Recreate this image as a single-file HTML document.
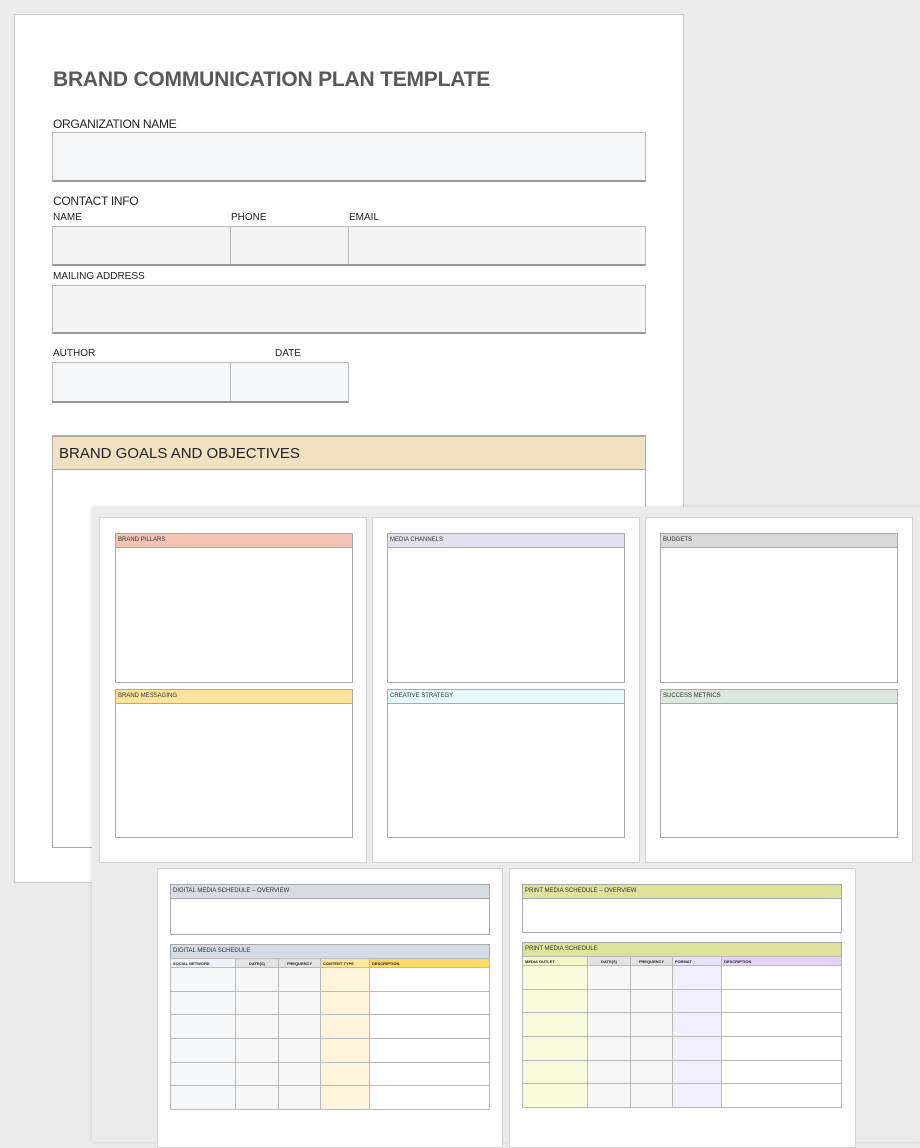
<!DOCTYPE html><html><head><style>
*{box-sizing:border-box;margin:0;padding:0}
body{width:920px;height:1142px;background:#ececec;position:relative;overflow:hidden;font-family:"Liberation Sans",sans-serif;color:#222}
.a{position:absolute}
.lbl{position:absolute;font-size:11px;color:#222}
.box{position:absolute;border:1px solid #bbb;border-bottom:2px solid #999}
.card{position:absolute;background:#fff;border:1px solid #d4d4d4}
.h{position:absolute;border:1px solid #aaa;font-size:6px;line-height:13px;padding:0 2px;color:#333}
.b{position:absolute;border:1px solid #aaa;background:#fff}
table{position:absolute;border-collapse:collapse;font-size:4px;font-weight:bold}
td{border:1px solid #bbb;padding:0 2px}
</style></head><body>
<div class="a" style="left:14px;top:14px;width:670px;height:869px;background:#fff;border:1px solid #ccc"></div>
<div class="a" style="left:53px;top:68px;font-size:21px;font-weight:bold;color:#595959;letter-spacing:-0.2px">BRAND COMMUNICATION PLAN TEMPLATE</div>
<div class="lbl" style="left:53px;top:117px;font-size:12px;letter-spacing:-0.3px">ORGANIZATION NAME</div>
<div class="box" style="left:52px;top:132px;width:594px;height:50px;background:#f7f8fa"></div>
<div class="lbl" style="left:53px;top:194px;font-size:12px;letter-spacing:-0.3px">CONTACT INFO</div>
<div class="lbl" style="left:53px;top:212px;font-size:10px">NAME</div>
<div class="lbl" style="left:231px;top:212px;font-size:10px">PHONE</div>
<div class="lbl" style="left:349px;top:212px;font-size:10px">EMAIL</div>
<div class="box" style="left:52px;top:226px;width:594px;height:40px;background:#f4f4f4"></div>
<div class="a" style="left:230px;top:227px;width:1px;height:37px;background:#bbb"></div>
<div class="a" style="left:348px;top:227px;width:1px;height:37px;background:#bbb"></div>
<div class="lbl" style="left:53px;top:271px;font-size:10px">MAILING ADDRESS</div>
<div class="box" style="left:52px;top:285px;width:594px;height:49px;background:#f4f4f4"></div>
<div class="lbl" style="left:53px;top:348px;font-size:10px">AUTHOR</div>
<div class="lbl" style="left:275px;top:348px;font-size:10px">DATE</div>
<div class="box" style="left:52px;top:362px;width:297px;height:41px;background:#f7f8fa"></div>
<div class="a" style="left:230px;top:363px;width:1px;height:38px;background:#bbb"></div>
<div class="a" style="left:52px;top:435px;width:594px;height:413px;border:1px solid #aaa;border-top:2px solid #aaa"></div>
<div class="a" style="left:53px;top:437px;width:592px;height:33px;background:#f0e2c0;border-bottom:1px solid #aaa;font-size:15px;padding:8px 6px;color:#222">BRAND GOALS AND OBJECTIVES</div>

<div class="a" style="left:92px;top:507px;width:828px;height:635px;background:#ebebeb;box-shadow:0 0 4px rgba(0,0,0,.15)"></div>
<div class="card" style="left:99px;top:517px;width:268px;height:346px"></div>
<div class="card" style="left:372px;top:517px;width:268px;height:346px"></div>
<div class="card" style="left:645px;top:517px;width:268px;height:346px"></div>

<div class="h" style="left:115px;top:533px;width:238px;height:15px;background:#f2c4b3">BRAND PILLARS</div>
<div class="b" style="left:115px;top:547px;width:238px;height:136px"></div>
<div class="h" style="left:115px;top:689px;width:238px;height:15px;background:#fde49a">BRAND MESSAGING</div>
<div class="b" style="left:115px;top:703px;width:238px;height:135px"></div>
<div class="h" style="left:387px;top:533px;width:238px;height:15px;background:#e2e2ef">MEDIA CHANNELS</div>
<div class="b" style="left:387px;top:547px;width:238px;height:136px"></div>
<div class="h" style="left:387px;top:689px;width:238px;height:15px;background:#e6fafb">CREATIVE STRATEGY</div>
<div class="b" style="left:387px;top:703px;width:238px;height:135px"></div>
<div class="h" style="left:660px;top:533px;width:238px;height:15px;background:#d9d9d9">BUDGETS</div>
<div class="b" style="left:660px;top:547px;width:238px;height:136px"></div>
<div class="h" style="left:660px;top:689px;width:238px;height:15px;background:#dbe9dc">SUCCESS METRICS</div>
<div class="b" style="left:660px;top:703px;width:238px;height:135px"></div>

<div class="card" style="left:157px;top:868px;width:346px;height:280px"></div>
<div class="card" style="left:509px;top:868px;width:347px;height:280px"></div>

<div class="h" style="left:170px;top:884px;width:320px;height:15px;background:#d6dce4">DIGITAL MEDIA SCHEDULE – OVERVIEW</div>
<div class="b" style="left:170px;top:898px;width:320px;height:37px"></div>
<div class="h" style="left:170px;top:944px;width:320px;height:15px;background:#d6dce4">DIGITAL MEDIA SCHEDULE</div>
<table style="left:170px;top:958px;width:320px">
<tr style="height:9px"><td style="width:65px;background:#eef1f6">SOCIAL NETWORK</td><td style="width:43px;background:#e2e2e2;text-align:center">DATE(S)</td><td style="width:42px;background:#e2e2e2;text-align:center">FREQUENCY</td><td style="width:49px;background:#ffe699">CONTENT TYPE</td><td style="background:#ffd966">DESCRIPTION</td></tr>
<tr style="height:23.7px"><td style="background:#f7f8fa"></td><td style="background:#f7f7f7"></td><td style="background:#f7f7f7"></td><td style="background:#fff5dc"></td><td></td></tr>
<tr style="height:23.7px"><td style="background:#f7f8fa"></td><td style="background:#f7f7f7"></td><td style="background:#f7f7f7"></td><td style="background:#fff5dc"></td><td></td></tr>
<tr style="height:23.7px"><td style="background:#f7f8fa"></td><td style="background:#f7f7f7"></td><td style="background:#f7f7f7"></td><td style="background:#fff5dc"></td><td></td></tr>
<tr style="height:23.7px"><td style="background:#f7f8fa"></td><td style="background:#f7f7f7"></td><td style="background:#f7f7f7"></td><td style="background:#fff5dc"></td><td></td></tr>
<tr style="height:23.7px"><td style="background:#f7f8fa"></td><td style="background:#f7f7f7"></td><td style="background:#f7f7f7"></td><td style="background:#fff5dc"></td><td></td></tr>
<tr style="height:23.7px"><td style="background:#f7f8fa"></td><td style="background:#f7f7f7"></td><td style="background:#f7f7f7"></td><td style="background:#fff5dc"></td><td></td></tr>
</table>

<div class="h" style="left:522px;top:884px;width:320px;height:15px;background:#dce39b">PRINT MEDIA SCHEDULE – OVERVIEW</div>
<div class="b" style="left:522px;top:898px;width:320px;height:35px"></div>
<div class="h" style="left:522px;top:942px;width:320px;height:15px;background:#dce39b">PRINT MEDIA SCHEDULE</div>
<table style="left:522px;top:956px;width:320px">
<tr style="height:9px"><td style="width:65px;background:#f3f8c8">MEDIA OUTLET</td><td style="width:43px;background:#e2e2e2;text-align:center">DATE(S)</td><td style="width:42px;background:#e2e2e2;text-align:center">FREQUENCY</td><td style="width:49px;background:#e6e2f8">FORMAT</td><td style="background:#e4d2f6">DESCRIPTION</td></tr>
<tr style="height:23.7px"><td style="background:#f8fcdc"></td><td style="background:#f7f7f7"></td><td style="background:#f7f7f7"></td><td style="background:#f1effd"></td><td></td></tr>
<tr style="height:23.7px"><td style="background:#f8fcdc"></td><td style="background:#f7f7f7"></td><td style="background:#f7f7f7"></td><td style="background:#f1effd"></td><td></td></tr>
<tr style="height:23.7px"><td style="background:#f8fcdc"></td><td style="background:#f7f7f7"></td><td style="background:#f7f7f7"></td><td style="background:#f1effd"></td><td></td></tr>
<tr style="height:23.7px"><td style="background:#f8fcdc"></td><td style="background:#f7f7f7"></td><td style="background:#f7f7f7"></td><td style="background:#f1effd"></td><td></td></tr>
<tr style="height:23.7px"><td style="background:#f8fcdc"></td><td style="background:#f7f7f7"></td><td style="background:#f7f7f7"></td><td style="background:#f1effd"></td><td></td></tr>
<tr style="height:23.7px"><td style="background:#f8fcdc"></td><td style="background:#f7f7f7"></td><td style="background:#f7f7f7"></td><td style="background:#f1effd"></td><td></td></tr>
</table>
</body></html>
